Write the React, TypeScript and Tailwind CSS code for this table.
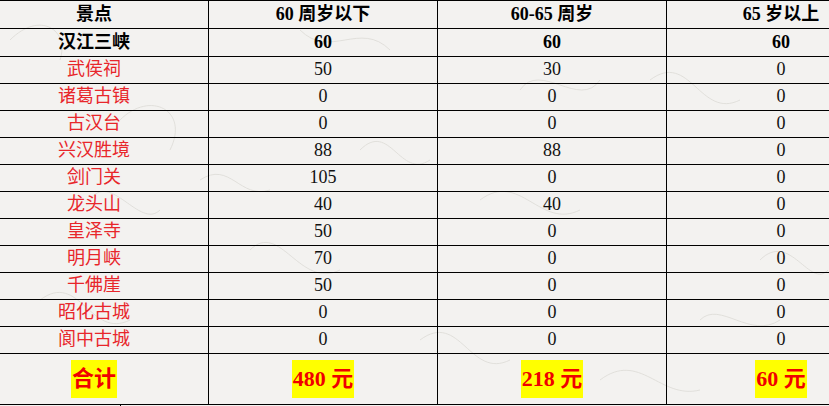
const rows: [string, string, string, string][] = [
  ["武侯祠", "50", "30", "0"],
  ["诸葛古镇", "0", "0", "0"],
  ["古汉台", "0", "0", "0"],
  ["兴汉胜境", "88", "88", "0"],
  ["剑门关", "105", "0", "0"],
  ["龙头山", "40", "40", "0"],
  ["皇泽寺", "50", "0", "0"],
  ["明月峡", "70", "0", "0"],
  ["千佛崖", "50", "0", "0"],
  ["昭化古城", "0", "0", "0"],
  ["阆中古城", "0", "0", "0"],
];

const font = { fontFamily: '"Liberation Serif", "Noto Sans CJK SC", serif' };

// faint fibres of the paper background
const fibres = [
  "M10 40 C 40 10, 70 30, 60 60",
  "M120 120 C 150 90, 190 110, 170 150",
  "M300 30 C 330 60, 360 20, 390 50",
  "M480 200 C 520 170, 540 230, 580 210",
  "M650 80 C 690 50, 700 120, 740 100",
  "M760 260 C 790 230, 810 290, 828 270",
  "M40 300 C 80 270, 90 340, 130 320",
  "M250 250 C 280 220, 300 290, 340 270",
  "M420 340 C 460 310, 470 380, 510 360",
  "M600 380 C 640 350, 660 400, 700 390",
  "M200 180 C 230 160, 240 200, 270 190",
  "M520 90 C 540 60, 580 110, 600 80",
  "M700 320 C 720 300, 750 340, 780 320",
  "M90 200 C 110 170, 140 230, 160 210",
  "M360 150 C 390 120, 400 180, 430 160",
];

function Cell({ children, className = "" }: { children: React.ReactNode; className?: string }) {
  return (
    <div className={`flex items-center justify-center border-r border-b border-black ${className}`}>
      {children}
    </div>
  );
}

export default function App() {
  return (
    <div className="relative h-[406px] w-[829px] overflow-hidden bg-[#f3f2f0]" style={font}>
      <svg className="absolute inset-0" width="829" height="406" fill="none" stroke="#dcdad6" strokeWidth="0.8">
        {fibres.map((d) => (
          <path key={d} d={d} />
        ))}
      </svg>
      <div className="relative ml-[-20px] w-[916px] border-t border-black">
        <div className="grid h-[28px] grid-cols-[229px_229px_229px_229px] text-[18px] font-bold text-black">
          <Cell>景点</Cell>
          <Cell>60 周岁以下</Cell>
          <Cell>60-65 周岁</Cell>
          <Cell>65 岁以上</Cell>
        </div>
        <div className="grid h-[27px] grid-cols-[229px_229px_229px_229px] text-[18px] font-bold text-black">
          <Cell>汉江三峡</Cell>
          <Cell>60</Cell>
          <Cell>60</Cell>
          <Cell>60</Cell>
        </div>
        {rows.map((r) => (
          <div key={r[0]} className="grid h-[27px] grid-cols-[229px_229px_229px_229px] text-[18px]">
            <Cell className="text-[#e8262b]">{r[0]}</Cell>
            <Cell className="text-[#111]">{r[1]}</Cell>
            <Cell className="text-[#111]">{r[2]}</Cell>
            <Cell className="text-[#111]">{r[3]}</Cell>
          </div>
        ))}
        <div className="grid h-[52px] grid-cols-[229px_229px_229px_229px] text-[22px] font-bold text-[#f00000]">
          <Cell>
            <span className="bg-[#ffff00] px-[1px] leading-[38px]">合计</span>
          </Cell>
          <Cell>
            <span className="bg-[#ffff00] px-[1px] leading-[38px]">480 元</span>
          </Cell>
          <Cell>
            <span className="bg-[#ffff00] px-[1px] leading-[38px]">218 元</span>
          </Cell>
          <Cell>
            <span className="bg-[#ffff00] px-[1px] leading-[38px]">60 元</span>
          </Cell>
        </div>
        <div className="h-[10px] w-[141px] border-r border-black" />
      </div>
    </div>
  );
}
